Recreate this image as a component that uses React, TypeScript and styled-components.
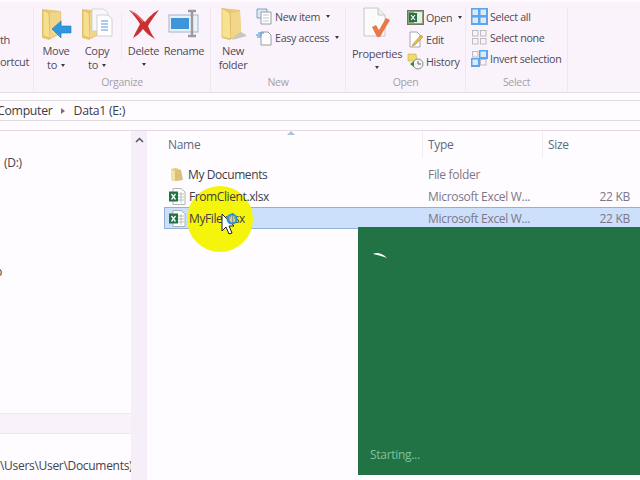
import styled, { createGlobalStyle } from "styled-components";

const GlobalStyle = createGlobalStyle`
  html, body { margin: 0; padding: 0; background: #fefcfe; }
  * { box-sizing: border-box; }
`;

const Screen = styled.div`
  position: relative;
  width: 640px;
  height: 480px;
  overflow: hidden;
  background: #fefcfe;
  font-family: "Open Sans", "Liberation Sans", sans-serif;
  letter-spacing: -0.3px;
  color: #4e4a55;
`;

//************ ribbon ************

const Ribbon = styled.div`
  display: flex;
  height: 93px;
  padding-top: 5px;
  background: #fbf3fb;
  border-top: 2px solid #fefafe;
  border-bottom: 1px solid #e2dce2;
`;

const Group = styled.div<{ $width: number }>`
  width: ${(p) => p.$width}px;
  flex: none;
  display: flex;
  flex-direction: column;
  border-right: 1px solid #efe7ef;
  height: 84px;
  overflow: hidden;
`;

const GroupBody = styled.div<{ $pad?: number }>`
  flex: 1;
  display: flex;
  padding-left: ${(p) => p.$pad ?? 0}px;
`;

const GroupTitle = styled.div`
  height: 16px;
  line-height: 14px;
  text-align: center;
  font-size: 10.5px;
  color: #a39fa8;
`;

const ClippedLabels = styled.div`
  display: flex;
  flex-direction: column;
  gap: 7px;
  width: 100%;
  padding-top: 25px;
  font-size: 11px;
  line-height: 15px;
  white-space: nowrap;
  overflow: hidden;
`;

const BigButton = styled.div<{ $width: number; $gap?: number }>`
  width: ${(p) => p.$width}px;
  margin-right: ${(p) => p.$gap ?? 0}px;
  flex: none;
  display: flex;
  flex-direction: column;
  align-items: center;
  font-size: 11px;
  line-height: 13.5px;
  white-space: nowrap;
  svg.main { height: 33px; margin-bottom: 4px; }
`;

const Caret = styled.span`
  display: inline-block;
  width: 0;
  height: 0;
  margin-left: 4px;
  vertical-align: middle;
  border-left: 2.5px solid transparent;
  border-right: 2.5px solid transparent;
  border-top: 3px solid #3c3a40;
`;

const BlockCaret = styled(Caret)`
  display: block;
  margin: 5px 0 0;
`;

const SoftRule = styled.div`
  width: 1px;
  height: 48px;
  margin: 6px 3px 0 4px;
  background: #f1e9f1;
  flex: none;
`;

const SmallColumn = styled.div<{ $gap: number; $top: number }>`
  display: flex;
  flex-direction: column;
  gap: ${(p) => p.$gap}px;
  padding-top: ${(p) => p.$top}px;
`;

const SmallButton = styled.div`
  display: flex;
  align-items: center;
  gap: 2px;
  height: 17px;
  font-size: 10.7px;
  white-space: nowrap;
  svg { width: 17px; height: 17px; flex: none; }
`;

const PropertiesLabel = styled.span`
  margin-top: 3px;
`;

//************ address bar ************

const AddressBar = styled.div`
  display: flex;
  align-items: center;
  height: 21px;
  margin-top: 7px;
  background: #fffcff;
  border-top: 1px solid #dedade;
  border-bottom: 1px solid #dedade;
  font-size: 12.3px;
  color: #3e3c44;
  white-space: nowrap;
`;

const Crumb = styled.span<{ $clip?: number }>`
  margin-left: ${(p) => -(p.$clip ?? 0)}px;
`;

const CrumbArrow = styled.span`
  width: 0;
  height: 0;
  margin: 0 9px 0 8px;
  border-top: 3.5px solid transparent;
  border-bottom: 3.5px solid transparent;
  border-left: 4px solid #77737c;
`;

//************ body ************

const Body = styled.div`
  display: grid;
  grid-template-columns: 131px 16px 1fr;
  height: 350px;
  margin-top: 9px;
  border-top: 1px solid #e6d6e6;
`;

const NavPane = styled.div`
  position: relative;
  overflow: hidden;
  font-size: 12px;
  color: #45424b;
  white-space: nowrap;
`;

const NavLabel = styled.div<{ $top: number }>`
  height: 18px;
  line-height: 18px;
  margin-top: ${(p) => p.$top}px;
`;

const NavDrive = styled(NavLabel)`
  padding-left: 4px;
`;

const NavCut = styled(NavLabel)`
  margin-left: -5px;
`;

const NavStrip = styled.div`
  height: 21px;
  margin-top: 132px;
  background: #faf2fb;
  border-top: 1px solid #efe7ef;
  border-bottom: 1px solid #efe7ef;
`;

const NavPath = styled.div`
  height: 18px;
  margin-top: 23px;
  line-height: 18px;
  text-align: right;
  padding-right: 3px;
`;

const ScrollTrack = styled.div`
  background: #f6effa;
  display: flex;
  justify-content: center;
  padding-top: 6px;
  svg { width: 9px; height: 6px; }
`;

const FileList = styled.div`
  position: relative;
  padding: 0 0 0 18px;
`;

const Columns = "257px 120px 1fr";

const HeaderRow = styled.div`
  display: grid;
  grid-template-columns: ${Columns};
  height: 27px;
  margin-bottom: 5px;
  font-size: 12px;
  color: #5f6a7c;
`;

const HeaderCell = styled.div`
  position: relative;
  padding: 5px 0 0 3px;
  line-height: 17px;
  &:not(:first-child) { border-left: 1px solid #f1edf3; padding-left: 5px; }
`;

const SortMark = styled.span`
  position: absolute;
  left: 122px;
  top: 0;
  width: 0;
  height: 0;
  border-left: 4px solid transparent;
  border-right: 4px solid transparent;
  border-bottom: 4px solid #a9c3dc;
`;

const Row = styled.div<{ $selected?: boolean }>`
  position: relative;
  display: grid;
  grid-template-columns: ${Columns};
  height: 22px;
  margin-left: -1px;
  align-items: center;
  font-size: 12px;
  background: ${(p) => (p.$selected ? "#cde0fb" : "transparent")};
  border: 1px solid ${(p) => (p.$selected ? "#8fb2dd" : "transparent")};
  border-right: none;
`;

const NameCell = styled.div`
  position: relative;
  z-index: 2;
  display: flex;
  align-items: center;
  gap: 3px;
  padding-left: 3px;
  letter-spacing: -0.4px;
  color: #3f3d46;
  white-space: nowrap;
`;

const TypeCell = styled.div`
  padding-left: 6px;
  color: #7d7686;
  white-space: nowrap;
  position: relative;
  z-index: 2;
`;

const SizeCell = styled.div`
  padding-right: 10px;
  text-align: right;
  color: #7d7686;
  position: relative;
  z-index: 2;
`;

const Highlight = styled.div`
  position: absolute;
  left: 187px;
  top: 186px;
  width: 66px;
  height: 66px;
  border-radius: 50%;
  background: #f5f50c;
  z-index: 1;
`;

const Pointer = styled.svg`
  position: absolute;
  left: 220px;
  top: 212px;
  width: 24px;
  height: 26px;
  z-index: 3;
`;

const Splash = styled.div`
  position: absolute;
  left: 358px;
  top: 227px;
  width: 282px;
  height: 248px;
  background: #217346;
  z-index: 4;
  padding: 221px 0 0 12px;
  font-size: 12px;
  line-height: 14px;
  color: #80c29d;
`;

const SplashDot = styled.svg`
  position: absolute;
  left: 15px;
  top: 25px;
  width: 15px;
  height: 7px;
`;

//************ icons ************

const BigFolder = ({ x = 0 }: { x?: number }) => (
  <g transform={`translate(${x} 0)`}>
    <path d="M2 2 L21 4 L22 26 L9 33 L2 31 Z" fill="#e7c978" />
    <path d="M3 3 L9 6 L10 31 L3 29 Z" fill="#f6e08e" stroke="#d2ac58" strokeWidth=".6" />
    <path d="M10 6 L20 5 L21 25 L10 31 Z" fill="#efd68a" />
  </g>
);

const MoveIcon = () => (
  <svg className="main" viewBox="0 0 34 33" width="34">
    <BigFolder x={1} />
    <path d="M13 22 L22 14 V19 H32 V26 H22 V31 Z" fill="#2f97e0" stroke="#1d7cc4" strokeWidth=".6" />
  </svg>
);

const CopyIcon = () => (
  <svg className="main" viewBox="0 0 34 33" width="34">
    <BigFolder />
    <path d="M12 2 H24 L28 6 V24 H12 Z" fill="#f8f8f8" stroke="#c9c9c9" strokeWidth=".7" />
    <path d="M17 8 H28 L32 12 V29 H17 Z" fill="#fff" stroke="#bdbdbd" strokeWidth=".7" />
    <path d="M21 14 H28 M21 17 H28 M21 20 H28 M21 23 H28" stroke="#5a95d6" strokeWidth="1.2" />
  </svg>
);

const DeleteIcon = () => (
  <svg className="main" viewBox="0 0 32 33" width="32">
    <path d="M1 3 C8 5 13 11 17 15 C21 10 26 5 31 3 C27 8 23 14 20 19 C22 24 24 28 27 32 C22 29 18 26 15 22 C12 26 9 29 5 31 C7 26 10 21 12 17 C9 12 5 7 1 3 Z" fill="#c9302f" />
    <path d="M3 4 C8 7 12 11 15 15" stroke="#e98b88" strokeWidth="1" fill="none" />
  </svg>
);

const RenameIcon = () => (
  <svg className="main" viewBox="0 0 32 33" width="32">
    <rect x="1" y="8" width="29" height="17" fill="#e9f1f8" stroke="#9bb6cf" />
    <rect x="3" y="11" width="18" height="11" fill="#3f95da" />
    <path d="M20 4 H28 M24 4 V29 M20 29 H28" stroke="#9a9a9a" strokeWidth="2.4" fill="none" />
  </svg>
);

const NewFolderIcon = () => (
  <svg className="main" viewBox="-2 0 30 33" width="30">
    <path d="M2 1 L20 3 L21 25 L26 28 L9 33 L2 31 Z" fill="#e7c978" />
    <path d="M2 1 L10 6 L11 32 L2 30 Z" fill="#f7e28f" stroke="#d2ac58" strokeWidth=".6" />
    <path d="M11 6 L20 4 L21 25 L11 31 Z" fill="#efd68a" />
    <path d="M21 25 L27 29 L12 33 Z" fill="#c9c6c4" />
  </svg>
);

const PropertiesIcon = () => (
  <svg className="main" viewBox="0 0 28 33" width="28" height="30">
    <path d="M1 1 H15 L22 8 V29 H1 Z" fill="#fbfbfb" stroke="#c8c6c8" />
    <path d="M15 1 V8 H22" fill="#eee" stroke="#c8c6c8" />
    <path d="M9 20 L13 18 L16 23 L23 11 L27 13 L17 30 H14 Z" fill="#e9784a" />
  </svg>
);

const NewItemIcon = () => (
  <svg viewBox="0 0 17 17">
    <path d="M1 1 H11 V10 H1 Z" fill="#dbe9f6" stroke="#7ea4c8" />
    <path d="M5 4 H15 V16 H5 Z" fill="#fff" stroke="#9a9a9a" />
    <path d="M7 7 H13 M7 10 H13 M7 13 H13" stroke="#b8c6d4" />
  </svg>
);

const EasyIcon = () => (
  <svg viewBox="0 0 17 17">
    <path d="M5 3 H12 L15 6 V16 H5 Z" fill="#fff" stroke="#9a9a9a" />
    <path d="M0 6 H6 M2 4 H8 M1 8 H5" stroke="#3f8fd6" strokeWidth="1" />
  </svg>
);

const SheetIcon = () => (
  <svg viewBox="0 0 17 17">
    <rect x=".5" y="1.5" width="16" height="14" fill="#8fa07a" stroke="#6e7a5e" />
    <rect x="7" y="3" width="8" height="11" fill="#e8f0e2" />
    <rect x="2" y="4" width="8" height="9" fill="#217346" />
    <path d="M4 6 L8 11 M8 6 L4 11" stroke="#fff" strokeWidth="1.2" />
  </svg>
);

const EditIcon = () => (
  <svg viewBox="0 0 17 17">
    <path d="M3 1 H10 L13 4 V16 H3 Z" fill="#fff" stroke="#a5a5a5" />
    <path d="M6 13 L14 4 L16 6 L8 14 L5 15 Z" fill="#e8b94c" stroke="#a68232" strokeWidth=".5" />
  </svg>
);

const HistoryIcon = () => (
  <svg viewBox="0 0 17 17">
    <path d="M1 1 H9 L10 8 H1 Z" fill="#f0dc6c" stroke="#c9ad47" strokeWidth=".6" />
    <circle cx="11" cy="11" r="5" fill="#f4f4f4" stroke="#8b8b8b" />
    <path d="M11 8 V11 H14" stroke="#666" fill="none" />
    <path d="M3 11 L7 8 V14 Z" fill="#2f8f3c" />
  </svg>
);

const cells = [
  [1, 1],
  [9, 1],
  [1, 9],
  [9, 9],
];

const SelectIcon = ({ mode }: { mode: "all" | "none" | "invert" }) => (
  <svg viewBox="0 0 17 17">
    {mode === "all" && <rect x="0" y="0" width="17" height="17" fill="#5aa5ee" />}
    {mode === "invert" && (
      <>
        <rect x="8" y="0" width="9" height="9" fill="#5aa5ee" />
        <rect x="0" y="8" width="9" height="9" fill="#5aa5ee" />
      </>
    )}
    {cells.map(([x, y], i) => {
      const filled = mode === "all" || (mode === "invert" && (i === 1 || i === 2));
      return (
        <rect
          key={i}
          x={x + 0.5}
          y={y + 0.5}
          width="5.5"
          height="5.5"
          fill={filled ? "#dceafa" : "#fbf3fb"}
          stroke={filled ? "none" : "#bdbbc0"}
        />
      );
    })}
  </svg>
);

const SmallFolder = () => (
  <svg viewBox="0 0 17 17" width="17" height="17">
    <path d="M3 3 L8 2 L13 4 V14 L6 15 L3 14 Z" fill="#e4c67c" />
    <path d="M3 3 L7 5 V15 L3 14 Z" fill="#f5e3a4" />
    <path d="M7 5 L13 4 L15 14 L7 15 Z" fill="#dcc07a" />
  </svg>
);

const ExcelIcon = () => (
  <svg viewBox="0 0 18 17" width="18" height="17">
    <path d="M5 .5 H13 L17 4 V16.5 H5 Z" fill="#fff" stroke="#9aa3a0" strokeWidth=".8" />
    <path d="M10 6 H16 M10 9 H16 M10 12 H16 M13 4 V15" stroke="#a8b5ae" strokeWidth=".8" />
    <rect x="1" y="3.5" width="9" height="10" fill="#217346" />
    <path d="M3.5 6 L7.5 11.5 M7.5 6 L3.5 11.5" stroke="#fff" strokeWidth="1.3" />
  </svg>
);

//************************************************************

export default function App() {
  return (
    <Screen>
      <GlobalStyle />
      <Ribbon>
        <Group $width={34}>
          <ClippedLabels>
            <span>th</span>
            <span>ortcut</span>
          </ClippedLabels>
        </Group>

        <Group $width={177}>
          <GroupBody $pad={3}>
            <BigButton $width={38} $gap={2}>
              <MoveIcon />
              Move
              <span>to<Caret /></span>
            </BigButton>
            <BigButton $width={40}>
              <CopyIcon />
              Copy
              <span>to<Caret /></span>
            </BigButton>
            <SoftRule />
            <BigButton $width={37}>
              <DeleteIcon />
              Delete
              <BlockCaret />
            </BigButton>
            <BigButton $width={44}>
              <RenameIcon />
              Rename
            </BigButton>
          </GroupBody>
          <GroupTitle>Organize</GroupTitle>
        </Group>

        <Group $width={135}>
          <GroupBody $pad={2}>
            <BigButton $width={40} $gap={3}>
              <NewFolderIcon />
              New
              <span>folder</span>
            </BigButton>
            <SmallColumn $gap={4} $top={1}>
              <SmallButton>
                <NewItemIcon />
                New item<Caret />
              </SmallButton>
              <SmallButton>
                <EasyIcon />
                Easy access<Caret />
              </SmallButton>
            </SmallColumn>
          </GroupBody>
          <GroupTitle>New</GroupTitle>
        </Group>

        <Group $width={120}>
          <GroupBody $pad={4}>
            <BigButton $width={54} $gap={3}>
              <PropertiesIcon />
              <PropertiesLabel>Properties</PropertiesLabel>
              <BlockCaret />
            </BigButton>
            <SmallColumn $gap={5} $top={2}>
              <SmallButton>
                <SheetIcon />
                Open<Caret />
              </SmallButton>
              <SmallButton>
                <EditIcon />
                Edit
              </SmallButton>
              <SmallButton>
                <HistoryIcon />
                History
              </SmallButton>
            </SmallColumn>
          </GroupBody>
          <GroupTitle>Open</GroupTitle>
        </Group>

        <Group $width={102}>
          <GroupBody $pad={5}>
            <SmallColumn $gap={4} $top={1}>
              <SmallButton>
                <SelectIcon mode="all" />
                Select all
              </SmallButton>
              <SmallButton>
                <SelectIcon mode="none" />
                Select none
              </SmallButton>
              <SmallButton>
                <SelectIcon mode="invert" />
                Invert selection
              </SmallButton>
            </SmallColumn>
          </GroupBody>
          <GroupTitle>Select</GroupTitle>
        </Group>
      </Ribbon>

      <AddressBar>
        <Crumb $clip={3}>Computer</Crumb>
        <CrumbArrow />
        <Crumb>Data1 (E:)</Crumb>
      </AddressBar>

      <Body>
        <NavPane>
          <NavDrive $top={23}>(D:)</NavDrive>
          <NavCut $top={91}>p</NavCut>
          <NavStrip />
          <NavPath>\Users\User\Documents)</NavPath>
        </NavPane>
        <ScrollTrack>
          <svg viewBox="0 0 9 6">
            <path d="M1 5 L4.5 1.5 L8 5" fill="none" stroke="#56535b" strokeWidth="1.5" />
          </svg>
        </ScrollTrack>
        <FileList>
          <HeaderRow>
            <HeaderCell>
              Name
              <SortMark />
            </HeaderCell>
            <HeaderCell>Type</HeaderCell>
            <HeaderCell>Size</HeaderCell>
          </HeaderRow>
          <Row>
            <NameCell>
              <SmallFolder />
              My Documents
            </NameCell>
            <TypeCell>File folder</TypeCell>
            <SizeCell />
          </Row>
          <Row>
            <NameCell>
              <ExcelIcon />
              FromClient.xlsx
            </NameCell>
            <TypeCell>Microsoft Excel W...</TypeCell>
            <SizeCell>22 KB</SizeCell>
          </Row>
          <Row $selected>
            <NameCell>
              <ExcelIcon />
              MyFile.xlsx
            </NameCell>
            <TypeCell>Microsoft Excel W...</TypeCell>
            <SizeCell>22 KB</SizeCell>
          </Row>
        </FileList>
      </Body>

      <Highlight />
      <Pointer viewBox="0 0 24 26">
        <path d="M2 2 V19 L6 15 L9 22 L12 21 L9 14 L14 14 Z" fill="#fff" stroke="#222" strokeWidth="1" />
        <circle cx="12" cy="7" r="4.5" fill="#9cc8ee" fillOpacity=".5" stroke="#2f8fdc" strokeWidth="2" />
      </Pointer>
      <Splash>
        <SplashDot viewBox="0 0 15 7">
          <path d="M0 2 C4 0 9 1 14 6 C9 4 5 3 0 2 Z" fill="#fff" />
        </SplashDot>
        Starting...
      </Splash>
    </Screen>
  );
}
